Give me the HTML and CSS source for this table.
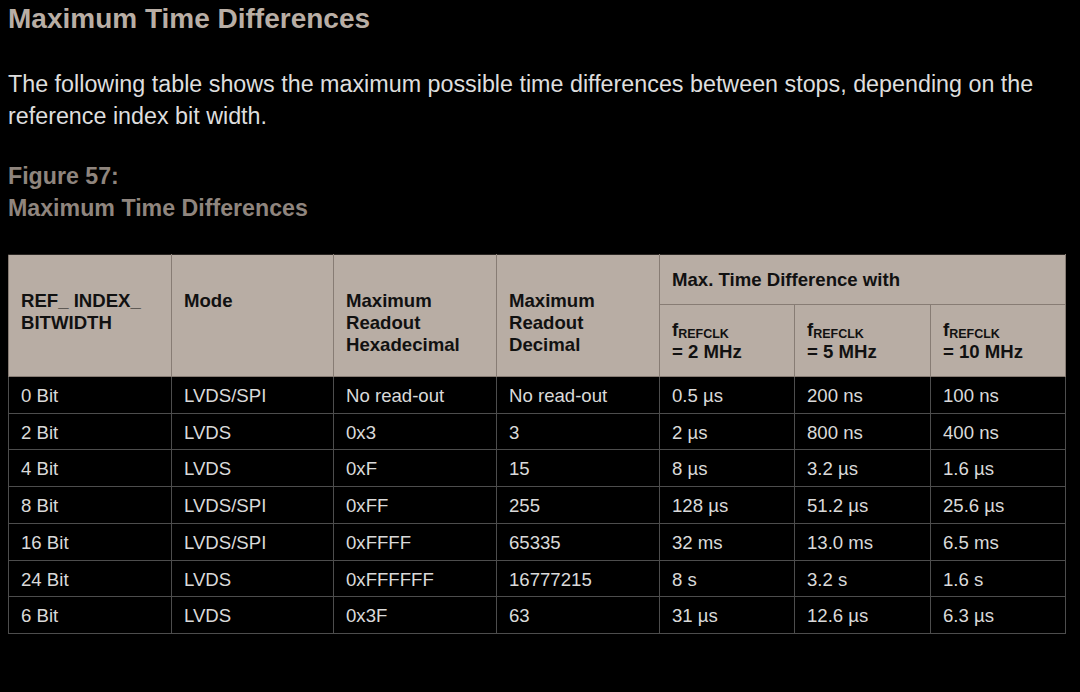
FILE: index.html
```html
<!DOCTYPE html>
<html lang="en">
<head>
<meta charset="utf-8">
<title>Maximum Time Differences</title>
<link rel="stylesheet" href="styles.css">
</head>
<body>
<h1 class="title">Maximum Time Differences</h1>
<p class="intro">The following table shows the maximum possible time differences between stops, depending on the reference index bit width.</p>
<p class="caption">Figure 57:<br>Maximum Time Differences</p>
<table class="grid">
  <colgroup>
    <col class="c1"><col class="c2"><col class="c3"><col class="c4"><col class="c5"><col class="c6"><col class="c7">
  </colgroup>
  <thead>
    <tr class="hrow1">
      <th rowspan="2" class="tall">REF_ INDEX_<br>BITWIDTH</th>
      <th rowspan="2" class="tall">Mode</th>
      <th rowspan="2" class="tall">Maximum<br>Readout<br>Hexadecimal</th>
      <th rowspan="2" class="tall">Maximum<br>Readout<br>Decimal</th>
      <th colspan="3" class="group">Max. Time Difference with</th>
    </tr>
    <tr class="hrow2">
      <th class="freq">f<span class="sub">REFCLK</span><br>= 2 MHz</th>
      <th class="freq">f<span class="sub">REFCLK</span><br>= 5 MHz</th>
      <th class="freq">f<span class="sub">REFCLK</span><br>= 10 MHz</th>
    </tr>
  </thead>
  <tbody>
    <tr><td>0 Bit</td><td>LVDS/SPI</td><td>No read-out</td><td>No read-out</td><td>0.5 µs</td><td>200 ns</td><td>100 ns</td></tr>
    <tr><td>2 Bit</td><td>LVDS</td><td>0x3</td><td>3</td><td>2 µs</td><td>800 ns</td><td>400 ns</td></tr>
    <tr><td>4 Bit</td><td>LVDS</td><td>0xF</td><td>15</td><td>8 µs</td><td>3.2 µs</td><td>1.6 µs</td></tr>
    <tr><td>8 Bit</td><td>LVDS/SPI</td><td>0xFF</td><td>255</td><td>128 µs</td><td>51.2 µs</td><td>25.6 µs</td></tr>
    <tr><td>16 Bit</td><td>LVDS/SPI</td><td>0xFFFF</td><td>65335</td><td>32 ms</td><td>13.0 ms</td><td>6.5 ms</td></tr>
    <tr><td>24 Bit</td><td>LVDS</td><td>0xFFFFFF</td><td>16777215</td><td>8 s</td><td>3.2 s</td><td>1.6 s</td></tr>
    <tr><td>6 Bit</td><td>LVDS</td><td>0x3F</td><td>63</td><td>31 µs</td><td>12.6 µs</td><td>6.3 µs</td></tr>
  </tbody>
</table>
</body>
</html>
```
FILE: styles.css
```css
html, body {
  margin: 0;
  background: #000;
}
body {
  padding: 3px 8px 0 8px;
  font-family: "Liberation Sans", Arial, Helvetica, sans-serif;
  color: #dcdcdc;
}
.title {
  margin: 0;
  font-size: 28px;
  line-height: 32px;
  font-weight: bold;
  color: #b9aea5;
}
.intro {
  margin: 33px 0 0 0;
  font-size: 23.3px;
  line-height: 32px;
  color: #dedede;
}
.caption {
  margin: 28px 0 0 0;
  font-size: 23.2px;
  line-height: 32px;
  font-weight: bold;
  color: #8f857e;
}
.grid {
  margin-top: 30px;
  border-collapse: collapse;
  table-layout: fixed;
  width: 1057px;
  font-size: 18.6px;
}
.c1 { width: 163px; }
.c2 { width: 162px; }
.c3 { width: 163px; }
.c4 { width: 163px; }
.c5 { width: 135px; }
.c6 { width: 136px; }
.c7 { width: 135px; }
.grid th {
  background: #b8ada4;
  color: #111;
  font-weight: bold;
  text-align: left;
  border: 1px solid #877c74;
  padding: 0 12px;
  line-height: 22px;
}
.grid thead tr:first-child th {
  border-top-color: #2a2623;
}
.grid th.tall {
  vertical-align: top;
  padding-top: 35px;
}
.hrow1 { height: 50px; }
.hrow2 { height: 72px; }
.grid th.group {
  vertical-align: middle;
}
.grid th.freq {
  vertical-align: middle;
  line-height: 22px;
  padding-top: 1px;
}
.sub {
  font-size: 12.5px;
  vertical-align: -1.5px;
  line-height: 0;
}
.grid td {
  border: 1px solid #4d4d4d;
  padding: 8px 12px 6px 12px;
  line-height: 21.7px;
  color: #dadada;
  vertical-align: middle;
  white-space: nowrap;
}
```
